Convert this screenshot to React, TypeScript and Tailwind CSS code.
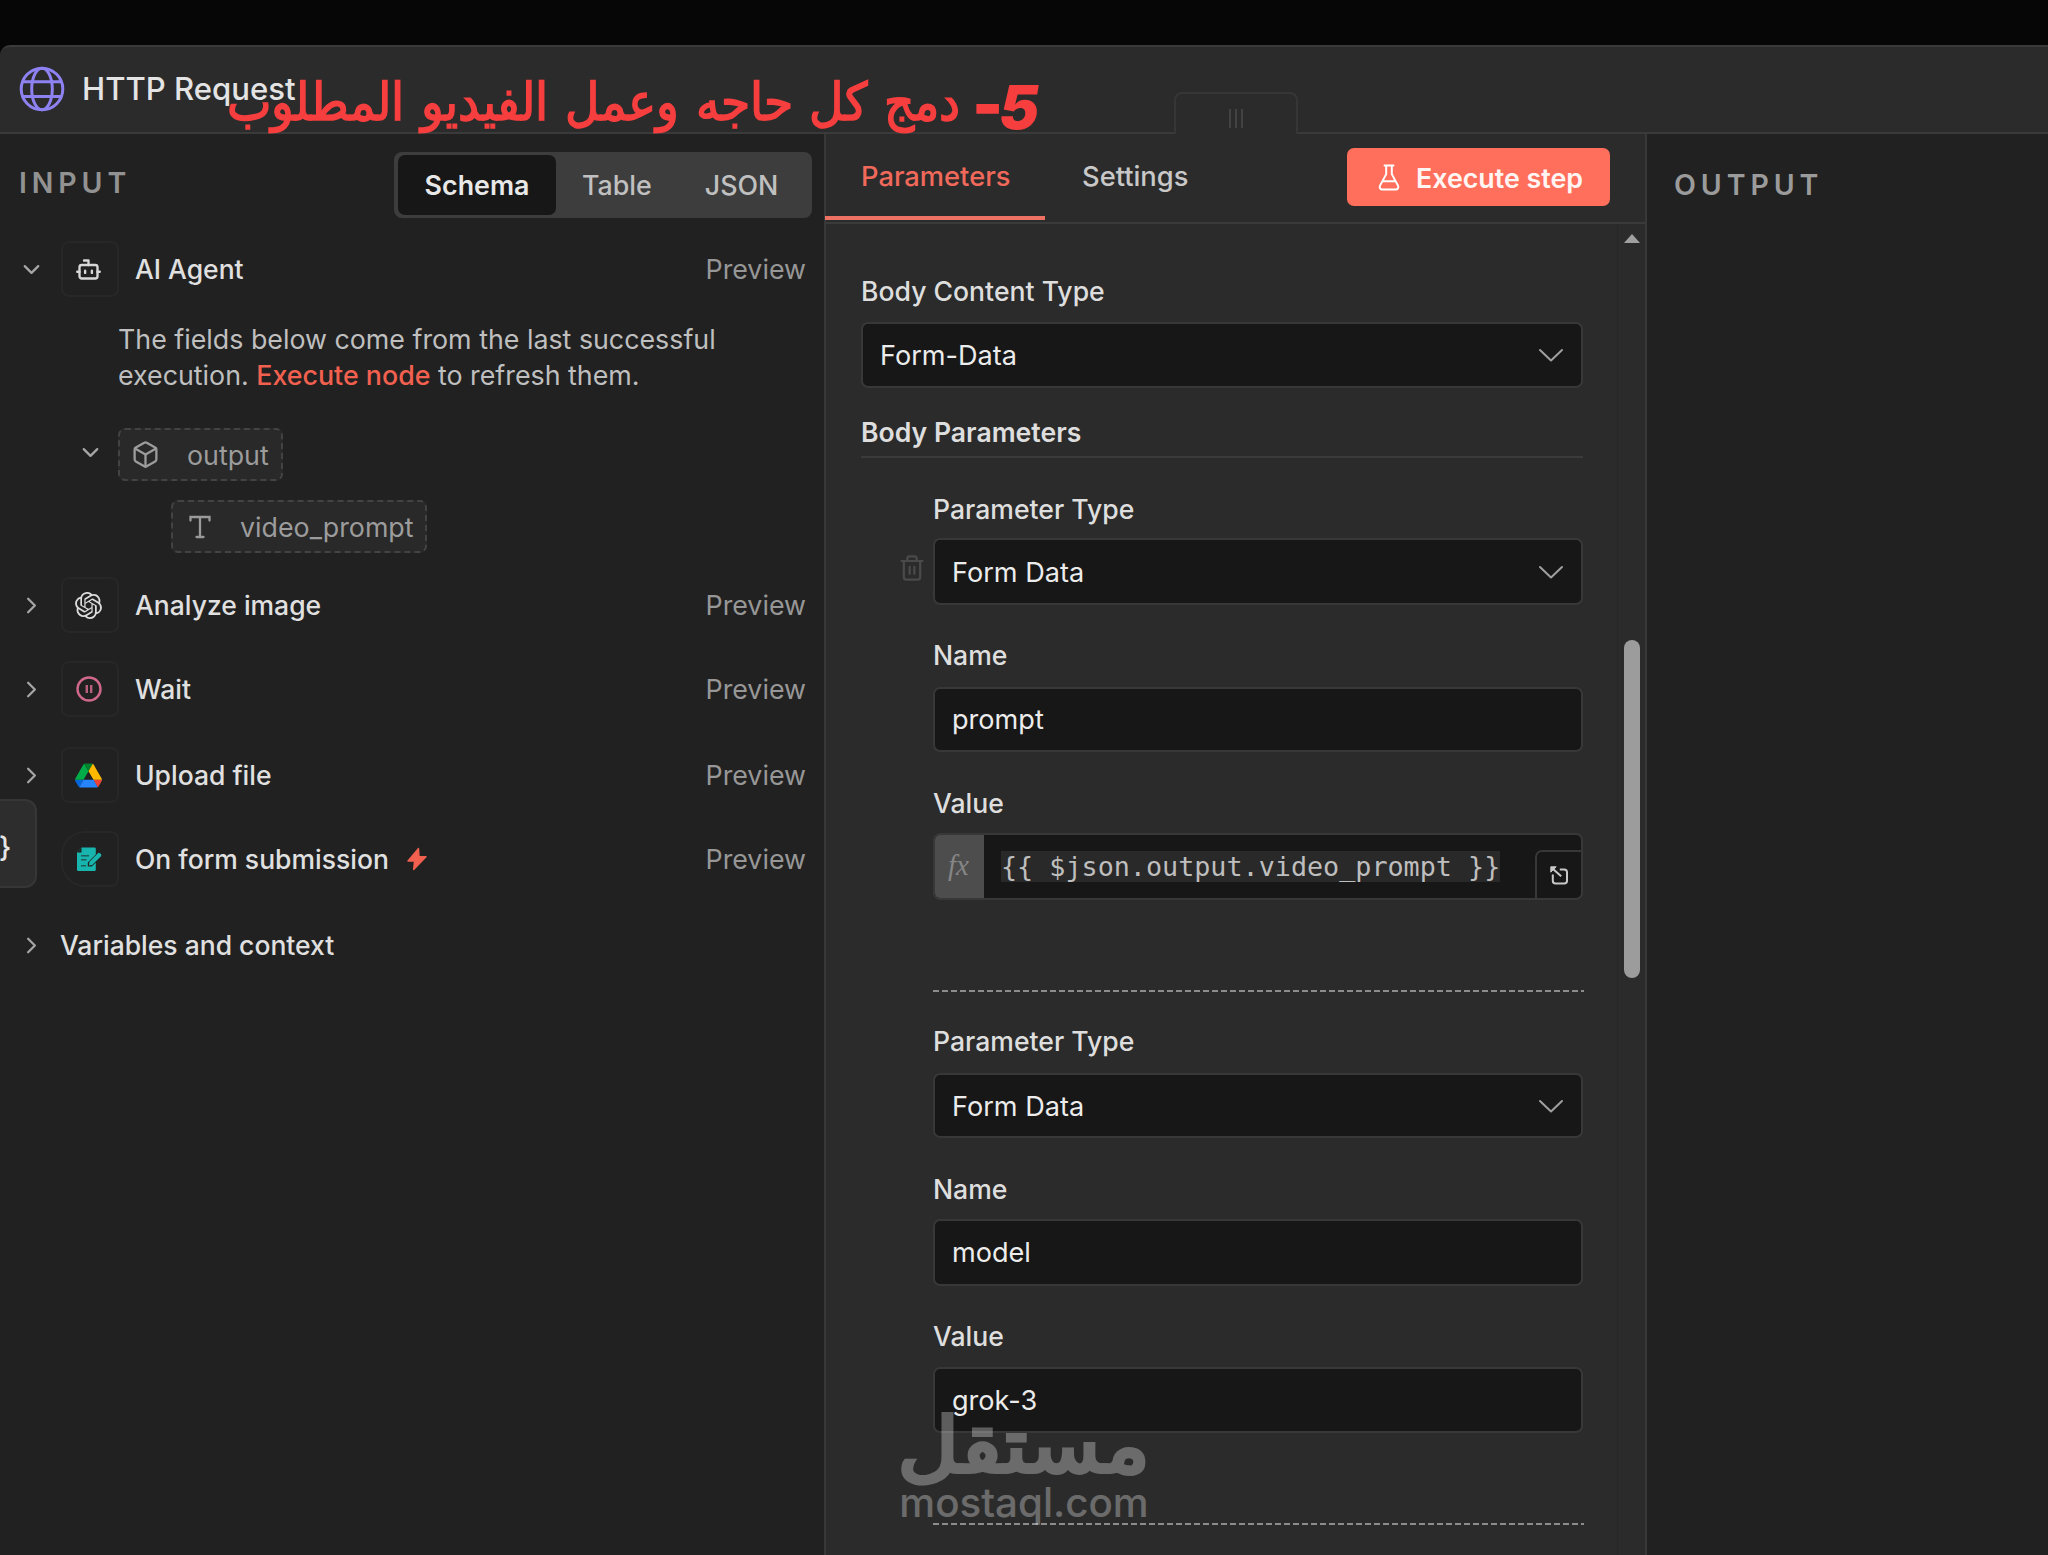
import React from "react";
import { Bot, Box, ChevronDown, ChevronRight, Trash2 } from "lucide-react";
import { SiOpenai } from "react-icons/si";

const GlobeIcon = () => (
  <svg viewBox="0 0 46 46" className="h-[46px] w-[46px]" fill="none" stroke="#8e82f3" strokeWidth="3">
    <circle cx="23" cy="23" r="20.8" />
    <ellipse cx="23" cy="23" rx="10.3" ry="20.8" />
    <path d="M3.5 15.8h39M3.5 30.6h39" />
  </svg>
);

const FlaskIcon = () => (
  <svg viewBox="0 0 22 27" className="h-[27px] w-[22px]" fill="none" stroke="#fff" strokeWidth="2" strokeLinecap="round" strokeLinejoin="round">
    <path d="M6.5 1.5h9M8.2 1.5v8.6L2 21.6c-.9 1.7.2 3.9 2.200 3.900h13.600c2 0 3.100-2.200 2.200-3.900L13.800 10.100V1.500M4.800 17.300h12.400" />
  </svg>
);

const DriveIcon = () => (
  <svg viewBox="0 0 87.3 78" className="h-[25px] w-[27px]">
    <path d="m6.600 66.850 3.850 6.650c.8 1.400 1.950 2.500 3.300 3.300l13.750-23.800h-27.500c0 1.550.4 3.100 1.200 4.500z" fill="#0066da" />
    <path d="m43.650 25-13.750-23.800c-1.350.8-2.500 1.900-3.300 3.300l-25.400 44a9.060 9.060 0 0 0-1.200 4.500h27.500z" fill="#00ac47" />
    <path d="m73.550 76.800c1.350-.8 2.500-1.900 3.300-3.300l1.600-2.750 7.650-13.250c.8-1.400 1.200-2.950 1.200-4.500h-27.500l5.850 11.500z" fill="#ea4335" />
    <path d="m43.650 25 13.750-23.800c-1.350-.8-2.900-1.200-4.500-1.200h-18.500c-1.600 0-3.150.45-4.500 1.200z" fill="#00832d" />
    <path d="m59.800 53h-32.300l-13.750 23.800c1.350.8 2.900 1.200 4.500 1.200h50.800c1.600 0 3.150-.45 4.500-1.200z" fill="#2684fc" />
    <path d="m73.400 26.500-12.700-22c-.8-1.400-1.950-2.500-3.300-3.300l-13.750 23.800 16.150 28h27.450c0-1.550-.4-3.100-1.200-4.500z" fill="#ffba00" />
  </svg>
);

const WaitIcon = () => (
  <svg viewBox="0 0 26 26" className="h-[26px] w-[26px]" fill="none" stroke="#d0688c" strokeWidth="2.400">
    <circle cx="13" cy="13" r="11.500" />
    <path d="M10.800 9v8M15.200 9v8" stroke="#b8607c" />
  </svg>
);

const FormIcon = () => (
  <svg viewBox="0 0 26 25" className="h-[25px] w-[26px]">
    <path d="M5.500.5h13a1.300 1.300 0 0 1 1.300 1.300v5.600l-8 8v4h4l4-4v7.300a1.300 1.300 0 0 1-1.300 1.300H2.300A1.300 1.300 0 0 1 1 22.700V5.500z" fill="#17b5ad" />
    <path d="M21.900 6.200a1.500 1.500 0 0 1 2.100 0l.9.9a1.500 1.500 0 0 1 0 2.100l-8.700 8.700-3.200.5.300-3.300z" fill="#17b5ad" />
    <path d="M5 8.700h8M5 12.700h5.500M5 18.700h5" stroke="#1d5d5b" strokeWidth="1.500" />
    <path d="M1 5.500h4.500v-5z" fill="#212121" />
  </svg>
);

const BoltIcon = () => (
  <svg viewBox="0 0 20 24" className="h-[24px] w-[20px]" fill="#f2604f" stroke="#f2604f" strokeWidth="1.400" strokeLinejoin="round">
    <path d="M11.500 1.500 1 14h6.500l-.8 8.500L19 9.800h-7z" />
  </svg>
);

const TextIcon = () => (
  <svg viewBox="0 0 22 24" className="h-[24px] w-[22px]" fill="none" stroke="#9a9a9a" strokeWidth="2.300" strokeLinecap="round">
    <path d="M1.500 5.500V2h19v3.500M11 2v20M7.500 22h7" />
  </svg>
);

const ExpandIcon = () => (
  <svg viewBox="0 0 19 19" className="h-[19px] w-[19px]" fill="none" stroke="#c8c8c8" strokeWidth="2">
    <path d="M2.800 8.500v6.200a2.800 2.800 0 0 0 2.800 2.800h8.600a2.800 2.800 0 0 0 2.800-2.800V6.300a2.800 2.800 0 0 0-2.800-2.800H9.800M3 3l8.200 7.200" />
    <path d="M.8.800h5.400L.8 6.200z" fill="#c8c8c8" strokeWidth="1" />
  </svg>
);

const NodeRow = ({ icon, label, open, trigger, className = "", box = "ml-[16px] w-[58px] rounded-[8px] pr-[3px]" }: {
  icon: React.ReactNode; label: string; open?: boolean; trigger?: boolean; className?: string; box?: string;
}) => (
  <div className={`flex h-14 items-center pr-[18px] pl-[18px] ${className}`}>
    {open
      ? <ChevronDown className="size-[27px] shrink-0 text-[#a6a6a6]" strokeWidth={2} />
      : <ChevronRight className="size-[27px] shrink-0 text-[#a6a6a6]" strokeWidth={2} />}
    <div className={`flex h-14 shrink-0 items-center justify-center border-2 border-[#272727] ${box}`}>{icon}</div>
    <span className="ml-[16px] text-[26.500px] font-medium text-[#e0e0e0]">{label}</span>
    {trigger && <span className="ml-[18px]"><BoltIcon /></span>}
    <span className="ml-auto text-[#979797]">Preview</span>
  </div>
);

const Label = ({ children, className = "" }: { children: React.ReactNode; className?: string }) => (
  <div className={`h-8 text-[26.600px] font-medium leading-[30px] text-[#dedede] ${className}`}>{children}</div>
);

const Field = ({ value, select, className }: { value: string; select?: boolean; className: string }) => (
  <div className={`flex items-center justify-between rounded-[7px] border-2 border-[#383838] bg-[#171717] pr-[17px] pl-[17px] text-[27.100px] text-[#ececec] ${className}`}>
    <span className={select ? "pt-[2px]" : "pt-px"}>{value}</span>
    {select && (
      <svg viewBox="0 0 26 14" className="h-[14px] w-[26px]" fill="none" stroke="#a0a0a0" strokeWidth="2" strokeLinecap="round" strokeLinejoin="round">
        <path d="M2 2l11 10.500L24 2" />
      </svg>
    )}
  </div>
);

const Dashes = ({ className }: { className: string }) => (
  <div className={`-mr-px h-[2px] bg-[repeating-linear-gradient(90deg,#8c8c8c_0_6px,transparent_6px_9px)] ${className}`} />
);

const InputPanel = () => (
  <section className="w-[824px] shrink-0 bg-[#212121]">
    <div className="flex items-start justify-between pt-[18px] pr-[12px] pl-[19px]">
      <h2 className="mt-[13px] text-[28.500px] font-semibold leading-9 tracking-[4.900px] text-[#929292]">INPUT</h2>
      <div className="flex h-[66px] w-[418px] items-center rounded-[8px] bg-[#3d3d3d] pl-1 text-[#c0c0c0]">
        <button className="h-[60px] w-[158px] rounded-[7px] bg-[#171717] font-semibold text-[#e8e8e8]">Schema</button>
        <button className="ml-[26px] font-medium">Table</button>
        <button className="ml-[53px] font-medium">JSON</button>
      </div>
    </div>
    <NodeRow open className="mt-[23px]" label="AI Agent" icon={<Bot className="size-[27px] text-[#d8d8d8]" strokeWidth={2.100} />} />
    <p className="mt-6 ml-[118px] leading-9 text-[#bfbfbf]">
      The fields below come from the last successful
      <br />
      execution. <span className="font-medium text-[#f2604f]">Execute node</span> to refresh them.
    </p>
    <div className="mt-[35px] flex items-center pl-[77px] text-[#9c9c9c]">
      <ChevronDown className="-mt-1 size-[27px] text-[#a6a6a6]" strokeWidth={2} />
      <div className="ml-[14px] flex h-[53px] w-[165px] items-center rounded-[7px] border-2 border-dashed border-[#434343] bg-[#292929] pl-[11px]">
        <Box className="size-[29px]" strokeWidth={1.900} />
        <span className="ml-[27px]">output</span>
      </div>
    </div>
    <div className="mt-[19px] ml-[171px] flex h-[53px] w-[256px] items-center rounded-[7px] border-2 border-dashed border-[#434343] bg-[#292929] pl-[16px] text-[#9c9c9c]">
      <TextIcon />
      <span className="ml-[29px]">video_prompt</span>
    </div>
    <NodeRow className="mt-[24px]" label="Analyze image" icon={<SiOpenai className="size-[27px] text-[#dcdcdc]" />} />
    <NodeRow className="mt-[28px]" label="Wait" icon={<WaitIcon />} />
    <NodeRow className="mt-[30px]" label="Upload file" icon={<DriveIcon />} />
    <NodeRow className="mt-[28px]" label="On form submission" trigger icon={<FormIcon />} box="ml-[16px] w-[58px] rounded-l-[24px] rounded-r-[8px] pr-[3px]" />
    <div className="mt-[30px] flex h-14 items-center pl-[18px]">
      <ChevronRight className="size-[27px] text-[#a6a6a6]" strokeWidth={2} />
      <span className="ml-[15px] text-[26.500px] font-medium text-[#e0e0e0]">Variables and context</span>
    </div>
  </section>
);

const ParametersPanel = () => (
  <section className="flex w-[823px] shrink-0 flex-col border-x-2 border-[#383838] bg-[#2b2b2b]">
    <div className="flex h-[90px] shrink-0 items-start border-b-2 border-[#3a3a3a] text-[27.300px] font-medium">
      <div className="-ml-[1px] h-[86px] w-[220px] border-b-[4px] border-[#ee7264] pl-9 pt-[23px] leading-[40px] text-[#f0695b]">Parameters</div>
      <div className="ml-[37px] pt-[23px] leading-[40px] text-[#c8c8c8]">Settings</div>
      <button className="mt-[14px] mr-[35px] ml-auto flex h-[58px] w-[263px] items-center rounded-[7px] bg-[#ff6f5c] pl-[31px] text-[26.800px] font-semibold text-[#fff5f2]">
        <FlaskIcon />
        <span className="ml-[16px] pt-[2px]">Execute step</span>
      </button>
    </div>
    <div className="flex grow">
      <div className="ml-[35px] w-[722px] pt-[52px]">
        <Label>Body Content Type</Label>
        <Field className="mt-[14px] h-[66px]" value="Form-Data" select />
        <div className="mt-7 h-[42px] border-b-2 border-[#3b3b3b] text-[26.600px] font-semibold leading-8 text-[#dedede]">Body Parameters</div>
        <div className="pl-[72px]">
          <Label className="mt-[36px]">Parameter Type</Label>
          <div className="mt-[12px] -ml-[34px] flex items-center">
            <Trash2 className="-mt-[8px] -ml-[1px] size-[28px] shrink-0 text-[#4a4a4a]" strokeWidth={1.900} />
            <Field className="ml-[7px] h-[67px] grow" value="Form Data" select />
          </div>
          <Label className="mt-[35px]">Name</Label>
          <Field className="mt-[15px] h-[65px]" value="prompt" />
          <Label className="mt-[36px]">Value</Label>
          <div className="mt-[13px] flex h-[67px] overflow-hidden rounded-[7px] border-2 border-[#383838] bg-[#171717]">
            <div className="-my-[2px] -ml-[2px] flex w-[51px] shrink-0 items-center justify-center bg-[#4d4d4d] pb-1 font-['Liberation_Serif',serif] text-[29px] italic text-[#858585]">fx</div>
            <span className="mt-[16px] ml-[17px] h-[31px] whitespace-nowrap bg-[#292929] font-['DejaVu_Sans_Mono',monospace] text-[26.750px] leading-[31px] text-[#bebebe]">{"{{ $json.output.video_prompt }}"}</span>
            <div className="-mr-[2px] mt-[15px] ml-auto flex w-[48px] shrink-0 items-center justify-center rounded-tl-[7px] border-2 border-b-0 border-[#383838]">
              <ExpandIcon />
            </div>
          </div>
          <Dashes className="mt-[90px]" />
          <Label className="mt-[34px]">Parameter Type</Label>
          <Field className="mt-[15px] h-[65px]" value="Form Data" select />
          <Label className="mt-[36px]">Name</Label>
          <Field className="mt-[13px] h-[67px]" value="model" />
          <Label className="mt-[35px]">Value</Label>
          <Field className="mt-[14px] h-[66px]" value="grok-3" />
          <Dashes className="mt-[90px]" />
        </div>
      </div>
      <div className="ml-auto flex w-[28px] flex-col items-start border-l border-[#272727] pl-[6px]">
        <div className="mt-[10px] h-0 w-0 border-x-[8.500px] border-b-[9px] border-x-transparent border-b-[#a0a0a0]" />
        <div className="mt-[397px] h-[338px] w-4 rounded-full bg-[#9c9c9c]" />
      </div>
    </div>
  </section>
);

const DragHandle = () => (
  <div className="absolute top-[92px] left-[1174px] flex h-[42px] w-[124px] items-center justify-center gap-[4px] rounded-t-[8px] border-2 border-b-0 border-[#363636] bg-[#2b2b2b] pt-[8px]">
    <i className="h-[19px] w-[2px] bg-[#424242]" />
    <i className="h-[19px] w-[2px] bg-[#424242]" />
    <i className="h-[19px] w-[2px] bg-[#424242]" />
  </div>
);

const Annotation = () => (
  <div className="absolute top-[67px] left-[227px] flex h-[70px] items-baseline whitespace-nowrap font-black leading-[60px] text-[#f73e3f]">
    <span dir="rtl" lang="ar" className="w-[733px] origin-bottom scale-y-[1.100] font-['Liberation_Serif',serif] text-[47px] font-bold [word-spacing:5px]">دمج كل حاجه وعمل الفيديو المطلوب</span>
    <span className="relative top-[7px] ml-[12px] w-[27px] text-[66px]">-</span>
    <span className="relative top-[8px] text-[60px] italic">5</span>
  </div>
);

const Watermark = () => (
  <div className="absolute top-[1397px] left-[900px] flex w-[248px] flex-col items-center text-white opacity-30">
    <span dir="rtl" lang="ar" className="h-[84px] translate-y-[5px] scale-x-[1.055] scale-y-[0.950] whitespace-nowrap font-['DejaVu_Sans',sans-serif] text-[80px] leading-[90px] [-webkit-text-stroke:4px_currentColor] [stroke-linejoin:round]">مستقل</span>
    <span className="h-[48px] text-[40.300px] font-medium leading-[43px]">mostaql.com</span>
  </div>
);

export default function App() {
  return (
    <div className="relative flex h-[1555px] w-[2048px] flex-col overflow-hidden bg-[#060606] font-['Inter',sans-serif] text-[26.800px] leading-8">
      <header className="mt-[45px] h-[89px] shrink-0 rounded-tl-[10px] border-y-2 border-[#3a3a3a] bg-[#2b2b2b]" />
      <DragHandle />
      <Annotation />
      <div className="absolute top-[65px] left-[19px] flex h-[47px] items-center">
        <GlobeIcon />
        <h1 className="ml-[17px] text-[31.100px] font-medium text-[#e4e4e4]">HTTP Request</h1>
      </div>
      <main className="flex grow">
        <InputPanel />
        <ParametersPanel />
        <section className="grow bg-[#212121] pt-[33px] pl-[27px]">
          <h2 className="text-[28.500px] font-semibold leading-9 tracking-[4.900px] text-[#9b9b9b]">OUTPUT</h2>
        </section>
      </main>
      <div className="absolute top-[799px] left-0 flex h-[89px] w-[37px] items-center rounded-r-[12px] border-2 border-l-0 border-[#363636] bg-[#2d2d2d] pt-[6px]">
        <span className="-ml-px text-[28px] font-medium text-[#e6e6e6]">{"}"}</span>
      </div>
      <Watermark />
    </div>
  );
}
